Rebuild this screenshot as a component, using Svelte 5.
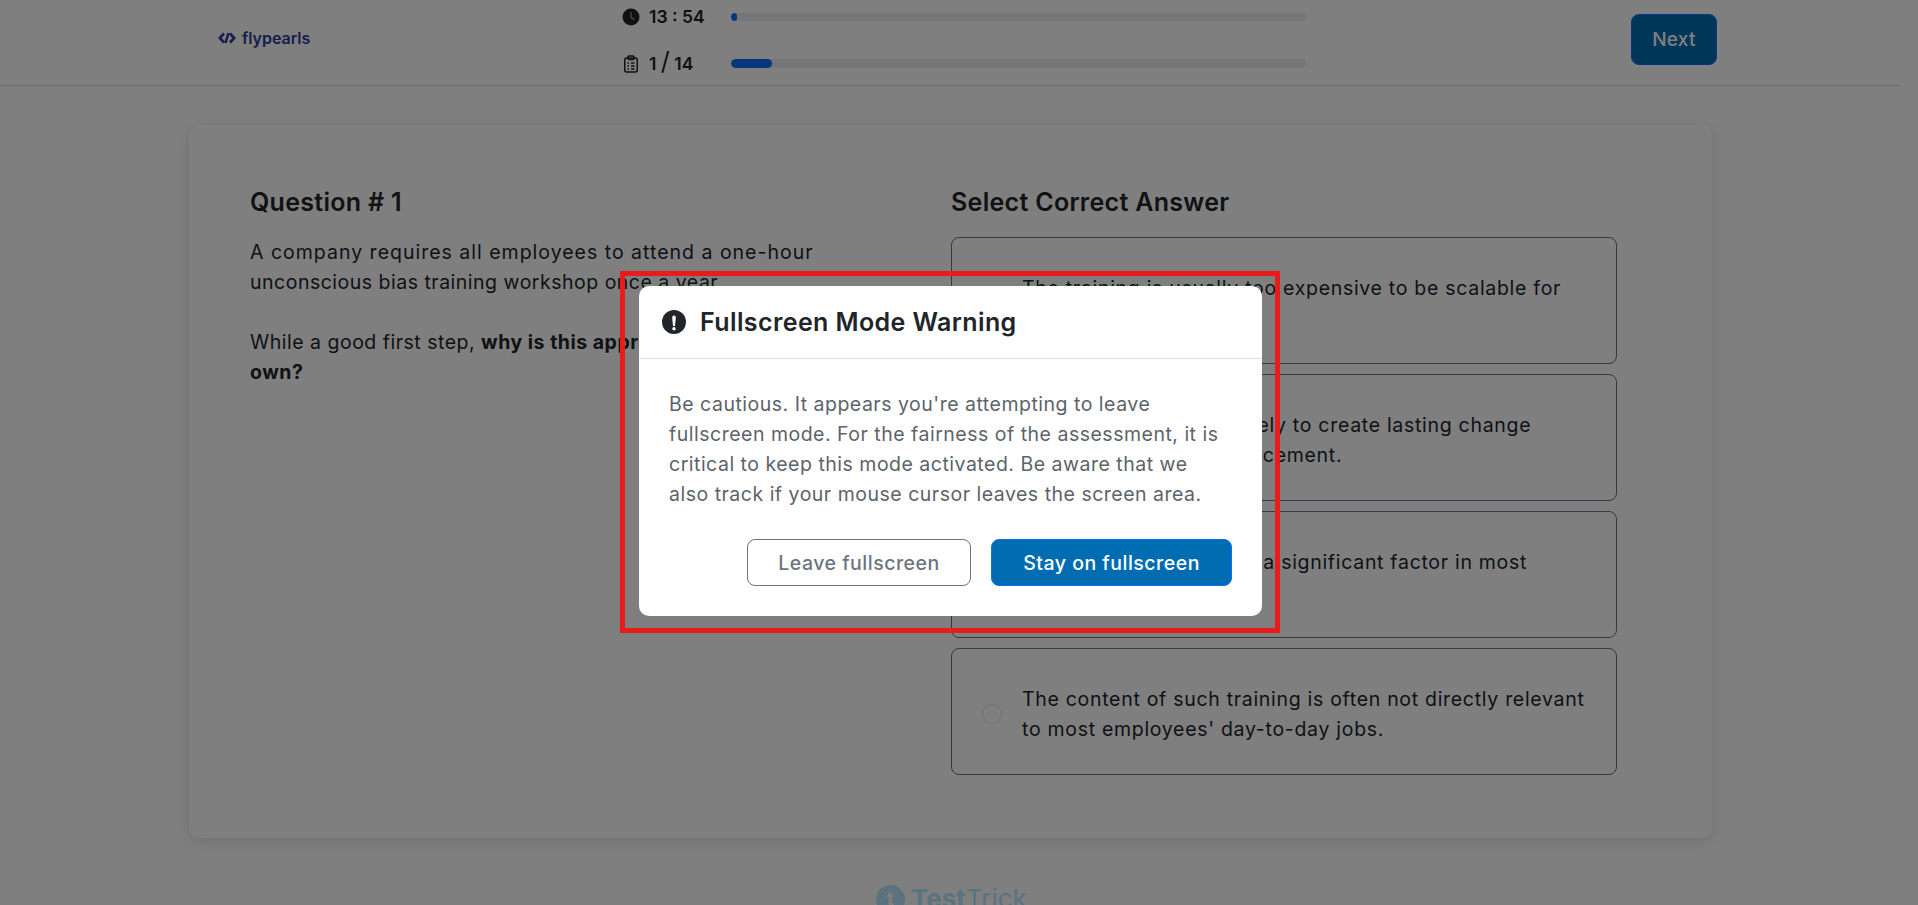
<script lang="ts">
  const options = [
    ['The training is usually too expensive to be scalable for', 'large organizations.'],
    ['A single session is unlikely to create lasting change', 'without continual reinforcement.'],
    ['Unconscious bias is not a significant factor in most', 'workplace decisions.'],
    ['The content of such training is often not directly relevant', "to most employees' day-to-day jobs."],
  ];
</script>

<div class="page">
  <header class="top">
    <div class="logo">
      <svg width="18" height="12" viewBox="0 0 18 12" fill="none" stroke="#2f3d95" stroke-width="2.600">
        <path d="M6 1.500 1.800 6 6 10.500M12 1.500 16.200 6 12 10.500M10.500 1 7.500 11" />
      </svg>
      <span>flypearls</span>
    </div>
    <div class="progress">
      <div class="row">
        <svg class="ico" width="18" height="18" viewBox="0 0 18 18">
          <circle cx="9" cy="9" r="8.500" fill="#222" />
          <path d="M9 4v5.500l3.500 2" fill="none" stroke="#808080" stroke-width="1.600" />
        </svg>
        <span class="label">13 : 54</span>
        <div class="track"><div class="fill" style="width: 1%"></div></div>
      </div>
      <div class="row">
        <svg class="ico" width="18" height="18" viewBox="0 0 18 18" fill="none" stroke="#222" stroke-width="1.500">
          <rect x="2.750" y="3" width="12.500" height="14" rx="2" />
          <rect x="6" y="1" width="6" height="3.500" rx="1" />
          <path d="M5.500 8h1.500M9 8h3.500M5.500 11h1.500M9 11h3.500M5.500 14h1.500M9 14h3.500" />
        </svg>
        <span class="label">1 <span class="slash">/</span> 14</span>
        <div class="track tall"><div class="fill" style="width: 7.100%"></div></div>
      </div>
    </div>
    <button class="next">Next</button>
  </header>

  <main class="card">
    <section class="question">
      <h2>Question # 1</h2>
      <p>A company requires all employees to attend a one-hour<br />unconscious bias training workshop once a year.</p>
      <p>While a good first step, <b>why is this approach insufficient on its<br />own?</b></p>
    </section>
    <section class="answers">
      <h2>Select Correct Answer</h2>
      {#each options as lines}
        <div class="option">
          <span class="radio"></span>
          <span class="text">{lines[0]}<br />{lines[1]}</span>
        </div>
      {/each}
    </section>
  </main>

  <footer class="foot">
    <span class="mark">t</span>
    <span class="brand"><b>Test</b>Trick</span>
  </footer>
</div>

<div class="backdrop">
  <div class="dialog">
    <div class="dialog-head">
      <svg width="24" height="24" viewBox="0 0 24 24">
        <circle cx="12" cy="12" r="12" fill="#212529" />
        <path d="M10.200 7.200a1.800 1.800 0 0 1 3.600 0l-.7 8a1.100 1.100 0 0 1-2.200 0z" fill="#fff" />
        <circle cx="12" cy="18.800" r="1.700" fill="#fff" />
      </svg>
      <h3>Fullscreen Mode Warning</h3>
    </div>
    <div class="dialog-body">
      <p>Be cautious. It appears you're attempting to leave<br />fullscreen mode. For the fairness of the assessment, it is<br />critical to keep this mode activated. Be aware that we<br />also track if your mouse cursor leaves the screen area.</p>
      <div class="actions">
        <button class="leave">Leave fullscreen</button>
        <button class="stay">Stay on fullscreen</button>
      </div>
    </div>
  </div>
</div>
<div class="callout"></div>

<style>
  :global(body) {
    margin: 0;
    height: 905px;
    overflow: hidden;
    background: #fff;
    font-family: Inter, 'Open Sans', sans-serif;
    color: #212529;
  }
  .page {
    width: 1901px;
  }
  .top {
    display: flex;
    align-items: flex-start;
    height: 85px;
    padding: 0 184px 0 218px;
    border-bottom: 1px solid #dcdcdc;
    width: 1499px;
  }
  .logo {
    width: 404px;
    height: 75px;
    display: flex;
    align-items: center;
    gap: 6px;
    font-size: 16px;
    font-weight: 600;
    color: #2f3d95;
  }
  .progress {
    width: 684px;
  }
  .row {
    display: flex;
    align-items: center;
    height: 17px;
    margin-top: 8px;
    margin-bottom: 30px;
  }
  .ico {
    flex: none;
    margin-right: 9px;
  }
  .label {
    width: 82px;
    font-size: 17.500px;
    font-weight: 600;
    color: #222;
    white-space: pre;
  }
  .slash {
    font-size: 25px;
    font-weight: 400;
    line-height: 17px;
  }
  .track {
    flex: 1;
    height: 8px;
    border-radius: 5px;
    background: #e9ecef;
    overflow: hidden;
  }
  .track.tall {
    height: 9px;
  }
  .fill {
    height: 100%;
    border-radius: 5px;
    background: #0d6efd;
  }
  .next {
    margin-left: auto;
    margin-top: 14px;
    width: 86px;
    height: 51px;
    border: 1px solid #0d6efd;
    border-radius: 8px;
    background: #006db3;
    color: #fff;
    font: 500 19px Inter, sans-serif;
    letter-spacing: 0.3px;
  }
  .card {
    display: flex;
    box-sizing: border-box;
    margin: 39px 0 0 189px;
    width: 1523px;
    height: 713px;
    padding: 59px 95px 0 61px;
    border-radius: 10px;
    background: #fff;
    box-shadow: 0 4px 16px rgba(0, 0, 0, 0.12);
  }
  .question {
    width: 701px;
    flex: none;
  }
  .answers {
    flex: 1;
  }
  h2 {
    margin: 0 0 17px;
    font-size: 25px;
    line-height: 36px;
    font-weight: 600;
    letter-spacing: 0.3px;
  }
  .question p,
  .option,
  .dialog-body p {
    font-size: 19.500px;
    letter-spacing: 0.5px;
    line-height: 30px;
  }
  .question p {
    margin: 0 0 30px;
  }
  .question p:first-of-type::first-line {
    letter-spacing: 1px;
  }
  .option {
    display: flex;
    align-items: center;
    box-sizing: border-box;
    height: 127px;
    margin-bottom: 10px;
    padding: 4px 0 0 30px;
    border: 1px solid #6c757d;
    border-radius: 8px;
    letter-spacing: 0.7px;
  }
  .radio {
    flex: none;
    width: 20px;
    height: 20px;
    margin-right: 20px;
    border: 1px solid #dee2e6;
    border-radius: 50%;
    box-sizing: border-box;
  }
  .text {
    white-space: nowrap;
  }
  .foot {
    display: flex;
    align-items: center;
    gap: 6px;
    margin: 43px 0 0 876px;
    color: #b6e4ff;
    font-size: 26px;
    line-height: 36px;
  }
  .mark {
    width: 29px;
    height: 29px;
    border-radius: 50%;
    background: #b6e4ff;
    color: #fff;
    font-size: 20px;
    font-weight: 700;
    line-height: 29px;
    text-align: center;
  }
  .backdrop {
    position: fixed;
    inset: 0;
    background: rgba(0, 0, 0, 0.5);
  }
  .dialog {
    position: absolute;
    left: 639px;
    top: 286px;
    width: 623px;
    height: 330px;
    border-radius: 10px;
    background: #fff;
    box-sizing: border-box;
  }
  .dialog-head {
    display: flex;
    align-items: center;
    gap: 14px;
    height: 72px;
    padding: 0 23px;
    border-bottom: 1px solid #dee2e6;
  }
  .dialog-head h3 {
    margin: 0;
    font-size: 25px;
    font-weight: 600;
    letter-spacing: 0.4px;
    line-height: 36px;
  }
  .dialog-body {
    padding: 30px 30px 0;
  }
  .dialog-body p {
    margin: 0;
    color: #5c636a;
  }
  .actions {
    display: flex;
    justify-content: flex-end;
    gap: 20px;
    margin-top: 30px;
  }
  .actions button {
    height: 47px;
    border-radius: 8px;
    font: 500 19.500px Inter, sans-serif;
    letter-spacing: 0.5px;
  }
  .leave {
    width: 224px;
    border: 1px solid #6c757d;
    background: #fff;
    color: #6c757d;
  }
  .stay {
    width: 241px;
    border: 1px solid #0d6efd;
    background: #006db3;
    color: #fff;
  }
  .callout {
    position: fixed;
    left: 620px;
    top: 271px;
    width: 660px;
    height: 362px;
    box-sizing: border-box;
    border: 5px solid #e91c1c;
  }
</style>
